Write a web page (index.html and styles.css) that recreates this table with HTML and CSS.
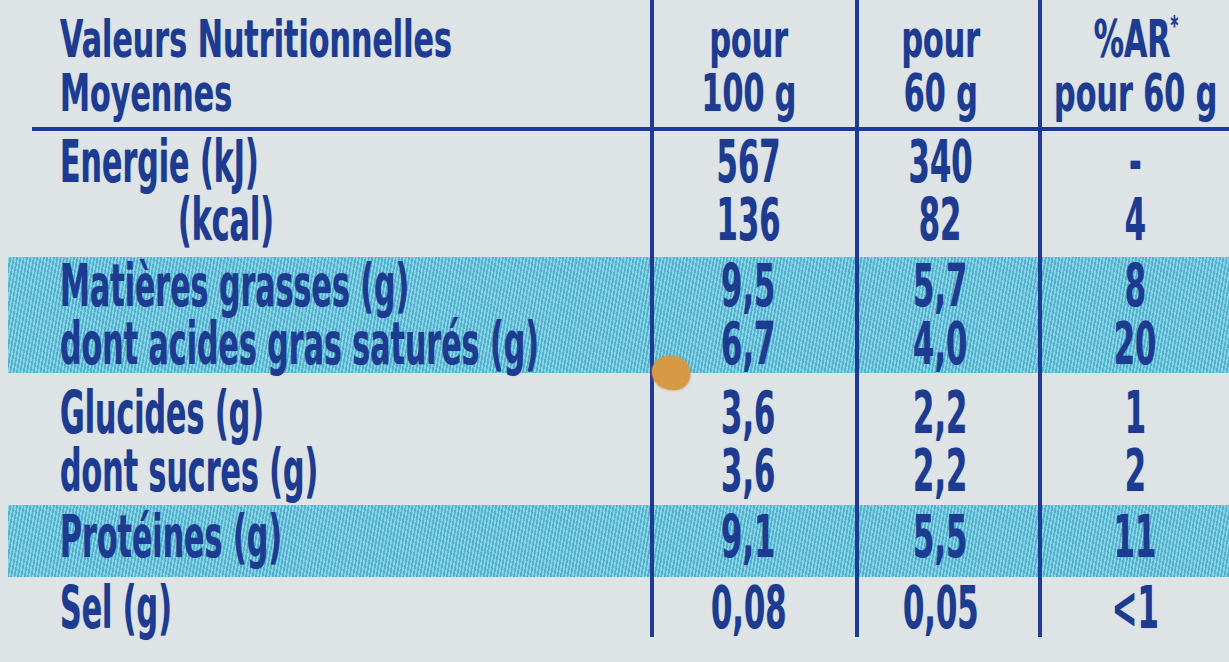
FILE: index.html
```html
<!DOCTYPE html>
<html lang="fr">
<head>
<meta charset="utf-8">
<title>Valeurs Nutritionnelles</title>
<link rel="stylesheet" href="styles.css">
</head>
<body>
<div class="label">
  <div class="grp head">
    <div class="c c1"><div class="ln"><span class="t">Valeurs Nutritionnelles</span></div><div class="ln"><span class="t">Moyennes</span></div></div>
    <div class="c c2"><div class="ln"><span class="t">pour</span></div><div class="ln"><span class="t">100 g</span></div></div>
    <div class="c c3"><div class="ln"><span class="t">pour</span></div><div class="ln"><span class="t">60 g</span></div></div>
    <div class="c c4"><div class="ln"><span class="t">%AR<sup class="ast">*</sup></span></div><div class="ln"><span class="t">pour 60 g</span></div></div>
  </div>
  <div class="rule"></div>
  <div class="grp g-a">
    <div class="c c1"><div class="ln"><span class="t">Energie (kJ)</span></div><div class="ln indent"><span class="t">(kcal)</span></div></div>
    <div class="c c2"><div class="ln"><span class="t">567</span></div><div class="ln"><span class="t">136</span></div></div>
    <div class="c c3"><div class="ln"><span class="t">340</span></div><div class="ln"><span class="t">82</span></div></div>
    <div class="c c4"><div class="ln"><span class="t">-</span></div><div class="ln"><span class="t">4</span></div></div>
  </div>
  <div class="grp band g-b">
    <div class="c c1"><div class="ln"><span class="t">Matières grasses (g)</span></div><div class="ln"><span class="t">dont acides gras saturés (g)</span></div></div>
    <div class="c c2"><div class="ln"><span class="t">9,5</span></div><div class="ln"><span class="t">6,7</span></div></div>
    <div class="c c3"><div class="ln"><span class="t">5,7</span></div><div class="ln"><span class="t">4,0</span></div></div>
    <div class="c c4"><div class="ln"><span class="t">8</span></div><div class="ln"><span class="t">20</span></div></div>
  </div>
  <div class="grp g-c">
    <div class="c c1"><div class="ln"><span class="t">Glucides (g)</span></div><div class="ln"><span class="t">dont sucres (g)</span></div></div>
    <div class="c c2"><div class="ln"><span class="t">3,6</span></div><div class="ln"><span class="t">3,6</span></div></div>
    <div class="c c3"><div class="ln"><span class="t">2,2</span></div><div class="ln"><span class="t">2,2</span></div></div>
    <div class="c c4"><div class="ln"><span class="t">1</span></div><div class="ln"><span class="t">2</span></div></div>
  </div>
  <div class="grp band g-d">
    <div class="c c1"><div class="ln"><span class="t">Protéines (g)</span></div></div>
    <div class="c c2"><div class="ln"><span class="t">9,1</span></div></div>
    <div class="c c3"><div class="ln"><span class="t">5,5</span></div></div>
    <div class="c c4"><div class="ln"><span class="t">11</span></div></div>
  </div>
  <div class="grp g-e">
    <div class="c c1"><div class="ln"><span class="t">Sel (g)</span></div></div>
    <div class="c c2"><div class="ln"><span class="t">0,08</span></div></div>
    <div class="c c3"><div class="ln"><span class="t">0,05</span></div></div>
    <div class="c c4"><div class="ln"><span class="t">&lt;1</span></div></div>
  </div>
  <div class="stain"></div>
</div>
</body>
</html>
```

FILE: styles.css
```css
* { box-sizing: border-box; }

body {
  margin: 0;
  width: 1229px;
  height: 662px;
  overflow: hidden;
  background: #dee4e6;
}

.label {
  position: relative;
  width: 1229px;
  height: 662px;
  overflow: hidden;
  font-family: "DejaVu Sans", sans-serif;
  font-weight: bold;
  font-size: 59px;
  color: #1d3b90;
  text-shadow: 0 0 1px rgba(29, 59, 144, 0.55);
}

.grp {
  display: grid;
  grid-template-columns: var(--c1, 650px) 205px 183px 1fr;
}

.c {
  padding-top: var(--pt, 0px);
  min-width: 0;
}

.c1 {
  padding-left: 60px;
}

.c2, .c3, .c4 {
  border-left: 4px solid #1d3b92;
}

.c2 { padding-right: 12px; }
.c3 { padding-right: 16px; }
.c4 { padding-right: 0; }

.ln {
  height: 58px;
  line-height: 58px;
  white-space: nowrap;
}

.c2 .ln, .c3 .ln, .c4 .ln {
  display: flex;
  justify-content: center;
}

.t {
  display: inline-block;
  transform: scaleX(0.52);
}

.c1 .t {
  transform: scaleX(0.51);
  transform-origin: left center;
}

.indent {
  padding-left: 118px;
}

.head {
  height: 127px;
  font-size: 52px;
  --pt: 12px;
}

.head .ln {
  height: 54px;
  line-height: 54px;
}

.head .t,
.head .c1 .t {
  transform: scaleX(0.58);
}

.ast {
  font-size: 26px;
  vertical-align: 22px;
  line-height: 0;
}

.rule {
  height: 4px;
  margin-left: 32px;
  background: #1d3b92;
}

.band {
  margin-left: 8px;
  --c1: 642px;
  background-color: #6cc4dc;
  background-image: repeating-linear-gradient(100deg, #86d3e7 0 1.6px, #55b1cc 1.6px 3.3px);
}

.band .c1 {
  padding-left: 52px;
}

.g-a { height: 126px; --pt: 2px; }
.g-b { height: 116px; --pt: 0px; }
.g-c { height: 132px; --pt: 11px; }
.g-d { height: 72px; --pt: 3px; }
.g-e { height: 55px; --pt: 2px; }

.stain {
  position: absolute;
  left: 652px;
  top: 356px;
  width: 38px;
  height: 34px;
  border-radius: 48% 52% 45% 55%;
  background: #d69a45;
  box-shadow: 0 0 3px #c58a3c;
}
```
